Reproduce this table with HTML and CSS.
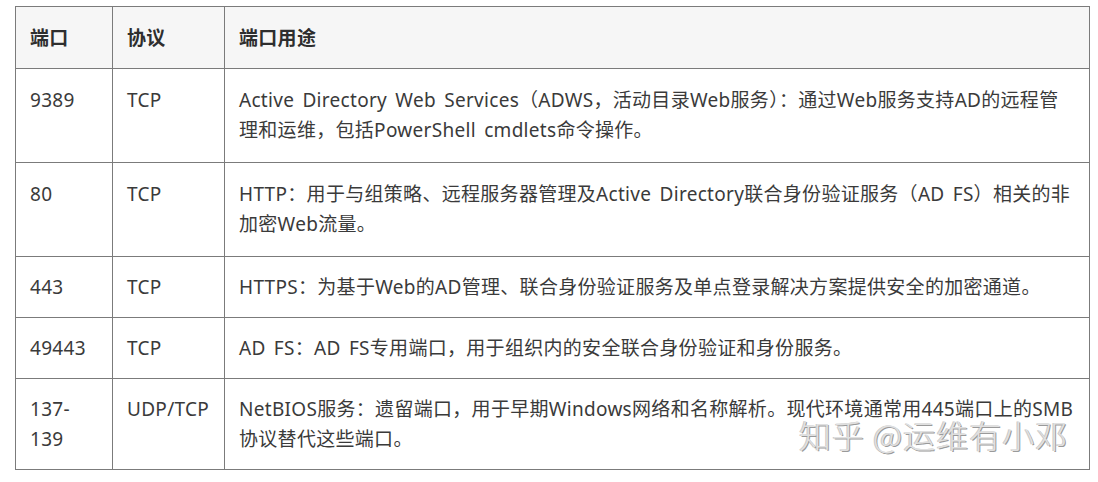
FILE: index.html
```html
<!DOCTYPE html>
<html lang="zh-CN">
<head>
<meta charset="utf-8">
<title>端口</title>
<link rel="stylesheet" href="styles.css">
</head>
<body>
<div class="page">
  <table class="ports">
    <colgroup>
      <col class="c-port">
      <col class="c-proto">
      <col class="c-desc">
    </colgroup>
    <thead>
      <tr><th>端口</th><th>协议</th><th>端口用途</th></tr>
    </thead>
    <tbody>
      <tr class="two">
        <td>9389</td><td>TCP</td>
        <td>Active Directory Web Services（ADWS，活动目录Web服务）：通过Web服务支持AD的远程管理和运维，包括PowerShell cmdlets命令操作。</td>
      </tr>
      <tr class="two">
        <td>80</td><td>TCP</td>
        <td>HTTP：用于与组策略、远程服务器管理及Active Directory联合身份验证服务（AD FS）相关的非加密Web流量。</td>
      </tr>
      <tr>
        <td>443</td><td>TCP</td>
        <td>HTTPS：为基于Web的AD管理、联合身份验证服务及单点登录解决方案提供安全的加密通道。</td>
      </tr>
      <tr>
        <td>49443</td><td>TCP</td>
        <td>AD FS：AD FS专用端口，用于组织内的安全联合身份验证和身份服务。</td>
      </tr>
      <tr>
        <td>137-<br>139</td><td>UDP/TCP</td>
        <td>NetBIOS服务：遗留端口，用于早期Windows网络和名称解析。现代环境通常用445端口上的SMB协议替代这些端口。</td>
      </tr>
    </tbody>
  </table>
  <div class="watermark">知乎 @运维有小邓</div>
</div>
</body>
</html>
```

FILE: styles.css
```css
html, body {
  margin: 0;
  padding: 0;
  background: #ffffff;
}

.page {
  position: relative;
  width: 1098px;
  height: 482px;
  padding: 6px 0 0 15px;
  box-sizing: border-box;
  font-family: "Noto Sans", "Noto Sans CJK SC", sans-serif;
}

.ports {
  border-collapse: collapse;
  width: 1075px;
  table-layout: fixed;
  font-size: 19px;
  line-height: 30px;
  letter-spacing: 0.3px;
  word-spacing: 3px;
  color: #3a3a3a;
}

.c-port { width: 97px; }
.c-proto { width: 112px; }

.ports th,
.ports td {
  border: 1.5px solid #7b7b7b;
  text-align: left;
  vertical-align: top;
  padding: 15px 14px 15px 14px;
}

.ports th {
  background: #f6f6f6;
  font-weight: 700;
  color: #2e2e2e;
  padding-top: 16px;
  padding-bottom: 15px;
}

.ports tr.two td {
  padding-top: 16px;
  padding-bottom: 17px;
}

.watermark {
  position: absolute;
  left: 799px;
  top: 412px;
  font-family: "Noto Sans CJK SC", sans-serif;
  font-size: 32px;
  line-height: 44px;
  font-weight: 300;
  color: #e0e0e0;
  letter-spacing: 1px;
  text-shadow: 1px 1px 0 #9a9a9a, -1px 0 0 #c8c8c8;
  white-space: nowrap;
}
```
